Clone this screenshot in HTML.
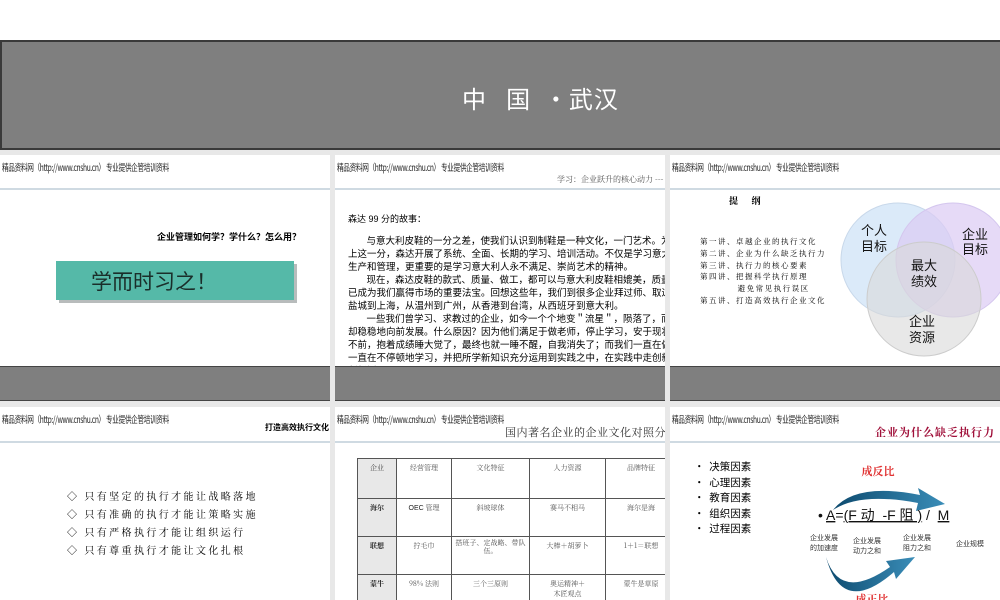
<!DOCTYPE html>
<html><head><meta charset="utf-8"><style>
*{margin:0;padding:0;box-sizing:border-box}
body{width:1000px;height:600px;overflow:hidden;background:#e8e8e8;position:relative;font-family:"Liberation Sans","Noto Sans CJK SC",sans-serif;color:#000}
.a{position:absolute}
.top{left:0;top:0;width:1000px;height:40px;background:#fff}
.banner{left:0;top:40px;width:1000px;height:110px;background:#7f7f7f;border:2px solid #3a3a3a;border-right:none}
.slide{position:absolute;background:#fff;overflow:hidden}
.hd{position:absolute;left:2px;top:5px;font-size:9.5px;font-family:"WenQuanYi Zen Hei","Noto Sans CJK SC",sans-serif;transform:scaleX(.7);transform-origin:left;white-space:nowrap;color:#222;letter-spacing:-0.5px}
.ln{position:absolute;left:0;right:0;height:2px;background:#cfdae2}
.gb{position:absolute;left:0;right:0;background:#7f7f7f;border-top:1px solid #444;border-bottom:1px solid #444}
.body{font-size:9.5px;line-height:13px}
.kai{font-family:"Noto Serif CJK SC",serif}
table{border-collapse:collapse;font-family:"Noto Serif CJK SC",serif;font-size:7px;color:#555}
td{border:1px solid #555;text-align:center;vertical-align:top;padding-top:4px}
</style></head><body>
<div class="a top"></div>
<div class="a banner"><div class="a" style="left:460px;top:38px;color:#fff;font-size:24px;letter-spacing:1px;font-family:'WenQuanYi Zen Hei','Noto Sans CJK SC',sans-serif">中&nbsp;&nbsp;&nbsp;国&nbsp;&nbsp;·武汉</div></div>

<!-- slide 1 -->
<div class="slide" style="left:0;top:155px;width:330px;height:246px">
<div class="hd">精品资料网（http://www.cnshu.cn） 专业提供企管培训资料</div>
<div class="ln" style="top:33px"></div>
<div class="a" style="left:157px;top:75px;font-size:9px;font-weight:bold">企业管理如何学？学什么？怎么用？</div>
<div class="a" style="left:59px;top:109px;width:238px;height:39px;background:#b8bcbc"></div>
<div class="a" style="left:56px;top:106px;width:238px;height:39px;background:#55b9a8"></div>
<div class="a" style="left:91px;top:111px;font-size:21px;color:#1a2e2a">学而时习之！</div>
<div class="gb" style="top:211px;height:35px"></div>
</div>

<!-- slide 2 -->
<div class="slide" style="left:335px;top:155px;width:330px;height:246px">
<div class="hd">精品资料网（http://www.cnshu.cn） 专业提供企管培训资料</div>
<div class="a kai" style="left:222px;top:19px;font-size:8px;color:#555;white-space:nowrap">学习：企业跃升的核心动力 ---</div>
<div class="ln" style="top:33px"></div>
<div class="a body" style="left:13px;top:58px;font-size:9px">森达 99 分的故事：</div>
<div class="a body" style="left:13px;top:80px;width:340px;white-space:nowrap">
&nbsp;&nbsp;&nbsp;&nbsp;&nbsp;&nbsp;&nbsp;与意大利皮鞋的一分之差，使我们认识到制鞋是一种文化，一门艺术。为了<br>
上这一分，森达开展了系统、全面、长期的学习、培训活动。不仅是学习意大利<br>
生产和管理，更重要的是学习意大利人永不满足、崇尚艺术的精神。<br>
&nbsp;&nbsp;&nbsp;&nbsp;&nbsp;&nbsp;&nbsp;现在，森达皮鞋的款式、质量、做工，都可以与意大利皮鞋相媲美，质量已<br>
已成为我们赢得市场的重要法宝。回想这些年，我们到很多企业拜过师、取过经<br>
盐城到上海，从温州到广州，从香港到台湾，从西班牙到意大利。<br>
&nbsp;&nbsp;&nbsp;&nbsp;&nbsp;&nbsp;&nbsp;一些我们曾学习、求教过的企业，如今一个个地变＂流星＂，陨落了，而我<br>
却稳稳地向前发展。什么原因？因为他们满足于做老师，停止学习，安于现状，<br>
不前，抱着成绩睡大觉了，最终也就一睡不醒，自我消失了；而我们一直在做学<br>
一直在不停顿地学习，并把所学新知识充分运用到实践之中，在实践中走创新路<br>
创新饭。</div>
<div class="gb" style="top:211px;height:35px"></div>
</div>

<!-- slide 3 -->
<div class="slide" style="left:670px;top:155px;width:330px;height:246px">
<div class="hd">精品资料网（http://www.cnshu.cn） 专业提供企管培训资料</div>
<div class="ln" style="top:33px"></div>
<div class="a kai" style="left:59px;top:39px;font-size:9px;font-weight:bold">提&nbsp;&nbsp;&nbsp;&nbsp;&nbsp;&nbsp;纲</div>
<div class="a kai" style="left:30px;top:81px;font-size:7.5px;line-height:11.8px;white-space:nowrap;letter-spacing:1.5px">第一讲、卓越企业的执行文化<br>第二讲、企业为什么缺乏执行力<br>第三讲、执行力的核心要素<br>第四讲、把握科学执行原理<br>&nbsp;&nbsp;&nbsp;&nbsp;&nbsp;&nbsp;&nbsp;&nbsp;&nbsp;&nbsp;&nbsp;避免常见执行误区<br>第五讲、打造高效执行企业文化</div>
<svg class="a" style="left:0;top:0" width="330" height="246">
<circle cx="228" cy="105" r="57" fill="#cfe3f7" fill-opacity=".75" stroke="#c8d8ea"/>
<circle cx="283" cy="105" r="57" fill="#dccbf4" fill-opacity=".7" stroke="#d4c6ee"/>
<circle cx="254" cy="144" r="57" fill="#d8d8d8" fill-opacity=".6" stroke="#ccc"/>
<g font-family="Noto Sans CJK SC,sans-serif" font-size="13" fill="#111" text-anchor="middle">
<text x="204" y="80">个人</text><text x="204" y="96">目标</text>
<text x="305" y="84">企业</text><text x="305" y="99">目标</text>
<text x="254" y="115">最大</text><text x="254" y="131">绩效</text>
<text x="252" y="171">企业</text><text x="252" y="187">资源</text></g>
</svg>
<div class="gb" style="top:211px;height:35px"></div>
</div>

<!-- slide 4 -->
<div class="slide" style="left:0;top:407px;width:330px;height:193px">
<div class="hd">精品资料网（http://www.cnshu.cn） 专业提供企管培训资料</div>
<div class="a" style="left:265px;top:15px;font-size:8px;font-weight:bold;white-space:nowrap">打造高效执行文化</div>
<div class="ln" style="top:34px"></div>
<div class="a kai" style="left:67px;top:80px;font-size:10px;line-height:18px;letter-spacing:2.4px;white-space:nowrap">◇ 只有坚定的执行才能让战略落地<br>◇ 只有准确的执行才能让策略实施<br>◇ 只有严格执行才能让组织运行<br>◇ 只有尊重执行才能让文化扎根</div>
</div>

<!-- slide 5 -->
<div class="slide" style="left:335px;top:407px;width:330px;height:193px">
<div class="hd">精品资料网（http://www.cnshu.cn） 专业提供企管培训资料</div>
<div class="a kai" style="left:170px;top:17px;font-size:11px;color:#333;white-space:nowrap;letter-spacing:.5px">国内著名企业的企业文化对照分析</div>
<div class="ln" style="top:34px"></div>
<table class="a" style="left:22px;top:51px;width:320px">
<tr style="height:40px"><td style="width:39px;background:#e8e8e8">企业</td><td style="width:55px">经营管理</td><td style="width:78px">文化特征</td><td style="width:76px">人力资源</td><td>品牌特征</td></tr>
<tr style="height:38px"><td style="background:#e8e8e8;font-weight:bold;color:#222">海尔</td><td><span style="font-family:Liberation Sans;color:#222">OEC</span> 管理</td><td>斜坡球体</td><td>赛马不相马</td><td>海尔是海</td></tr>
<tr style="height:38px"><td style="background:#e8e8e8;font-weight:bold;color:#222">联想</td><td>拧毛巾</td><td style="line-height:8px;padding-top:2px">搭班子、定战略、带队伍。</td><td>大棒＋胡萝卜</td><td>1＋1＝联想</td></tr>
<tr style="height:40px"><td style="background:#e8e8e8;font-weight:bold;color:#222">蒙牛</td><td>98% 法则</td><td>三个三原则</td><td>奥运精神＋<br>木匠观点</td><td>蒙牛是草原</td></tr>
</table>
</div>

<!-- slide 6 -->
<div class="slide" style="left:670px;top:407px;width:330px;height:193px">
<div class="hd">精品资料网（http://www.cnshu.cn） 专业提供企管培训资料</div>
<div class="a kai" style="left:205px;top:17px;font-size:11px;color:#a0103a;font-weight:bold;white-space:nowrap;letter-spacing:1px">企业为什么缺乏执行力</div>
<div class="ln" style="top:34px"></div>
<div class="a" style="left:24px;top:52px;font-size:10.5px;line-height:15.6px;font-family:'Noto Sans CJK SC',sans-serif">•&nbsp;&nbsp;决策因素<br>•&nbsp;&nbsp;心理因素<br>•&nbsp;&nbsp;教育因素<br>•&nbsp;&nbsp;组织因素<br>•&nbsp;&nbsp;过程因素</div>
<svg class="a" style="left:0;top:0" width="330" height="193">
<defs><linearGradient id="g" x1="0" x2="1"><stop offset="0" stop-color="#0d4a6e"/><stop offset="1" stop-color="#3a8db8"/></linearGradient></defs>
<path d="M163 103 Q185 75 250 88 L248 81 L275 97 L246 104 L248 96 Q190 85 163 103 Z" fill="url(#g)"/>
<path d="M156 150 Q170 195 220 160 L216 154 L245 150 L226 172 L224 165 Q172 210 156 150 Z" fill="url(#g)"/>
<g font-family="Noto Serif CJK SC,serif" font-weight="bold" fill="#e03030" font-size="11" text-anchor="middle">
<text x="208" y="68">成反比</text><text x="202" y="196">成正比</text></g>
<text x="148" y="113" font-family="Liberation Sans,Noto Sans CJK SC,sans-serif" font-size="14" fill="#111">• <tspan text-decoration="underline">A</tspan>=<tspan text-decoration="underline">(F 动&#160;&#160;-F 阻 )</tspan> /&#160;&#160;<tspan text-decoration="underline">M</tspan></text>
<g font-family="Noto Sans CJK SC,sans-serif" font-size="7" fill="#333">
<text x="140" y="133">企业发展</text><text x="140" y="143">的加速度</text>
<text x="183" y="136">企业发展</text><text x="183" y="146">动力之和</text>
<text x="233" y="133">企业发展</text><text x="233" y="143">阻力之和</text>
<text x="286" y="139">企业规模</text></g>
</svg>
</div>
</body></html>
